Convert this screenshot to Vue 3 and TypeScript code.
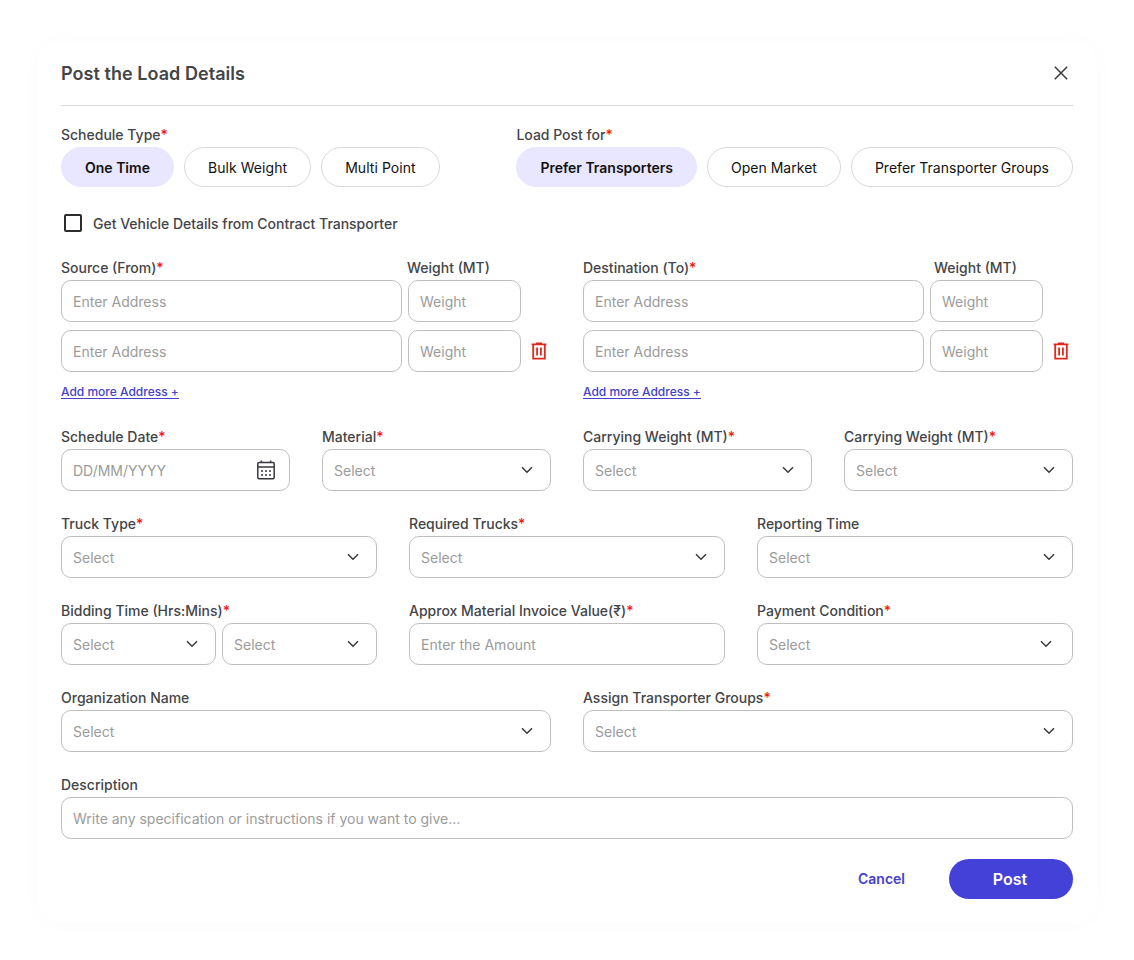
<script setup lang="ts">
import { ref } from 'vue'

interface Field {
  label: string
  required?: boolean
  placeholder: string
  kind: 'select' | 'text' | 'date'
  inset?: boolean
}

interface Row {
  cols: 'four' | 'three' | 'two' | 'one'
  groups: Field[][]
}

const scheduleTypes = ['One Time', 'Bulk Weight', 'Multi Point']
const postTargets = ['Prefer Transporters', 'Open Market', 'Prefer Transporter Groups']
const schedule = ref(scheduleTypes[0])
const target = ref(postTargets[0])
const contract = ref(false)

const places = ref([
  { id: 'from', label: 'Source (From)', rows: 2 },
  { id: 'to', label: 'Destination (To)', rows: 2 },
])

const select = (label: string, required = true, inset = false): Field => ({
  label, required, placeholder: 'Select', kind: 'select', inset,
})

const rows: Row[] = [
  {
    cols: 'four',
    groups: [
      [{ label: 'Schedule Date', required: true, placeholder: 'DD/MM/YYYY', kind: 'date' }],
      [select('Material')],
      [select('Carrying Weight (MT)')],
      [select('Carrying Weight (MT)')],
    ],
  },
  {
    cols: 'three',
    groups: [[select('Truck Type')], [select('Required Trucks')], [select('Reporting Time', false)]],
  },
  {
    cols: 'three',
    groups: [
      [select('Bidding Time (Hrs:Mins)'), select('')],
      [{ label: 'Approx Material Invoice Value(₹)', required: true, placeholder: 'Enter the Amount', kind: 'text' }],
      [select('Payment Condition', true, true)],
    ],
  },
  { cols: 'two', groups: [[select('Organization Name', false)], [select('Assign Transporter Groups')]] },
  {
    cols: 'one',
    groups: [[{ label: 'Description', placeholder: 'Write any specification or instructions if you want to give...', kind: 'text' }]],
  },
]
</script>

<template>
  <main class="page">
    <form class="card" @submit.prevent>
      <header class="head">
        <h1>Post the Load Details</h1>
        <button type="button" class="close" aria-label="Close">
          <svg width="14" height="14" viewBox="0 0 14 14"><path d="M.8.8l12.4 12.4M13.2.8L.8 13.2" /></svg>
        </button>
      </header>

      <div class="options">
        <section>
          <div class="label">Schedule Type<i>*</i></div>
          <div class="chips">
            <button v-for="s in scheduleTypes" :key="s" type="button" class="chip" :class="{ on: s === schedule }" @click="schedule = s">{{ s }}</button>
          </div>
        </section>
        <section class="targets">
          <div class="label">Load Post for<i>*</i></div>
          <div class="chips">
            <button v-for="t in postTargets" :key="t" type="button" class="chip" :class="{ on: t === target }" @click="target = t">{{ t }}</button>
          </div>
        </section>
      </div>

      <label class="check">
        <input v-model="contract" type="checkbox" />
        <span>Get Vehicle Details from Contract Transporter</span>
      </label>

      <div class="places">
        <section v-for="p in places" :key="p.id" class="place" :class="p.id">
          <div class="place-grid">
            <div class="label">{{ p.label }}<i>*</i></div>
            <div class="label weight-label">Weight (MT)</div>
          </div>
          <div v-for="n in p.rows" :key="n" class="place-grid place-row">
            <input class="box" placeholder="Enter Address" />
            <input class="box" placeholder="Weight" />
            <button v-if="n > 1" type="button" class="trash" aria-label="Remove address" @click="p.rows--">
              <svg width="16" height="18" viewBox="0 0 16 18">
                <path d="M.6 2.4h14.8M4.9 1.4h6.2M2.2 2.6v14.1h11.6V2.6M6.1 5.4v8.2M9.9 5.4v8.2" />
              </svg>
            </button>
          </div>
          <button type="button" class="more" @click="p.rows++">Add more Address +</button>
        </section>
      </div>

      <div v-for="(row, r) in rows" :key="r" class="row" :class="row.cols">
        <div v-for="(group, g) in row.groups" :key="g" class="group">
          <div v-for="(f, k) in group" :key="k" class="field">
            <div class="label">{{ f.label }}<i v-if="f.required && f.label">*</i></div>
            <input v-if="f.kind === 'text'" class="box" :placeholder="f.placeholder" />
            <button v-else type="button" class="box pick" :class="{ inset: f.inset }">
              <span>{{ f.placeholder }}</span>
              <svg v-if="f.kind === 'date'" width="18" height="20" viewBox="0 0 18 20" class="calendar">
                <rect x=".8" y="2.6" width="16.4" height="16.1" rx="1.2" />
                <path d="M.8 7.1h16.4M4.4.4v2.4M13.6.4v2.4" />
                <path class="dots" d="M4 11h2M8 11h2M12 11h2M4 15h2M8 15h2M12 15h2" />
              </svg>
              <svg v-else width="12" height="8" viewBox="0 0 12 8" class="chevron"><path d="M1 1.3l5 5 5-5" /></svg>
            </button>
          </div>
        </div>
      </div>

      <footer class="actions">
        <button type="button" class="cancel">Cancel</button>
        <button type="submit" class="post">Post</button>
      </footer>
    </form>
  </main>
</template>

<style>
body {
  margin: 0;
  background: #fff;
}
</style>

<style scoped>
.page {
  box-sizing: border-box;
  height: 960px;
  padding: 41px 37px 0;
  font-family: Inter, 'Liberation Sans', sans-serif;
  font-size: 14px;
  color: #434548;
}
.card {
  box-sizing: border-box;
  height: 882px;
  padding: 0 24px;
  border-radius: 24px;
  background: #fff;
  box-shadow: 0 0 24px rgba(0, 0, 0, 0.018);
}
button,
input {
  box-sizing: border-box;
  margin: 0;
  padding: 0;
  border: 0;
  background: none;
  font: inherit;
  letter-spacing: inherit;
  color: inherit;
}
button {
  cursor: pointer;
}
svg {
  display: block;
  fill: none;
  stroke: currentColor;
}
.head {
  display: flex;
  align-items: center;
  justify-content: space-between;
  box-sizing: border-box;
  height: 65px;
  border-bottom: 1px solid #d9d9d9;
}
h1 {
  margin: 0;
  padding-top: 2px;
  font-size: 18px;
  font-weight: 600;
  line-height: 24px;
  letter-spacing: 0.05px;
}
.close {
  margin-right: 5px;
  color: #37393c;
}
.close svg {
  stroke-width: 1.5;
}
.options {
  display: flex;
  justify-content: space-between;
  margin-top: 17px;
}
.label {
  height: 24px;
  font-weight: 500;
  line-height: 24px;
  white-space: nowrap;
}
.label i {
  font-style: normal;
  color: #f3180d;
}
.chips {
  display: flex;
  gap: 10px;
}
.chip {
  height: 40px;
  padding: 0 23px;
  border: 1px solid #d9d9d9;
  border-radius: 20px;
  letter-spacing: 0.06px;
  color: #111;
  white-space: nowrap;
}
.targets .chip {
  letter-spacing: 0.015px;
}
.chip.on {
  border-color: #e8e7ff;
  background: #e8e7ff;
  font-weight: 600;
  letter-spacing: 0;
}
.check {
  display: flex;
  align-items: center;
  height: 20px;
  margin: 26px 0 0 3px;
  font-weight: 500;
  letter-spacing: -0.01px;
}
.check input {
  appearance: none;
  width: 18px;
  height: 18px;
  margin-right: 11px;
  border: 2px solid #2c2c2e;
  border-radius: 2px;
}
.check input:checked {
  background: #4441d8;
}
.places {
  display: grid;
  grid-template-columns: 490px 490px;
  gap: 32px;
  margin-top: 23px;
}
.place-grid {
  display: grid;
  grid-template-columns: 341px 113px 18px;
  column-gap: 6px;
  align-items: center;
}
.place-row + .place-row {
  margin-top: 8px;
}
.from .weight-label {
  margin-left: -1px;
}
.to .weight-label {
  margin-left: 4px;
}
.trash {
  margin-left: 4px;
  color: #e0291d;
}
.trash svg {
  stroke-width: 1.8;
}
.box {
  display: block;
  width: 100%;
  height: 42px;
  padding: 0 11px;
  border: 1px solid #bfbfbf;
  border-radius: 10px;
  background: #fff;
  text-align: left;
}
.box::placeholder {
  color: #9b9b9b;
  opacity: 1;
}
.more {
  display: block;
  height: 15px;
  margin: 12px 0 26px;
  border-bottom: 1px solid #4441c8;
  font-size: 12px;
  font-weight: 500;
  line-height: 15px;
  color: #4441c8;
}
.row {
  display: grid;
  column-gap: 32px;
  margin-bottom: 21px;
}
.four {
  grid-template-columns: repeat(4, 1fr);
}
.three {
  grid-template-columns: repeat(3, 1fr);
}
.two {
  grid-template-columns: repeat(2, 1fr);
}
.group {
  display: flex;
  gap: 6px;
}
.field {
  flex: 1 1 0;
  min-width: 0;
}
.pick {
  display: flex;
  align-items: center;
  justify-content: space-between;
  color: #37393c;
}
.pick span {
  color: #9b9b9b;
}
.chevron {
  margin-right: 6px;
  stroke-width: 1.5;
}
.inset .chevron {
  margin-right: 9px;
}
.calendar {
  margin-right: 3px;
  stroke-width: 1.5;
}
.actions {
  display: flex;
  justify-content: flex-end;
  gap: 44px;
  margin-top: -1px;
}
.cancel {
  padding-bottom: 1px;
  font-weight: 600;
  color: #4441c8;
}
.post {
  width: 124px;
  height: 40px;
  padding-right: 2px;
  border-radius: 20px;
  background: #4441d8;
  font-size: 16px;
  font-weight: 600;
  color: #fff;
}
</style>
